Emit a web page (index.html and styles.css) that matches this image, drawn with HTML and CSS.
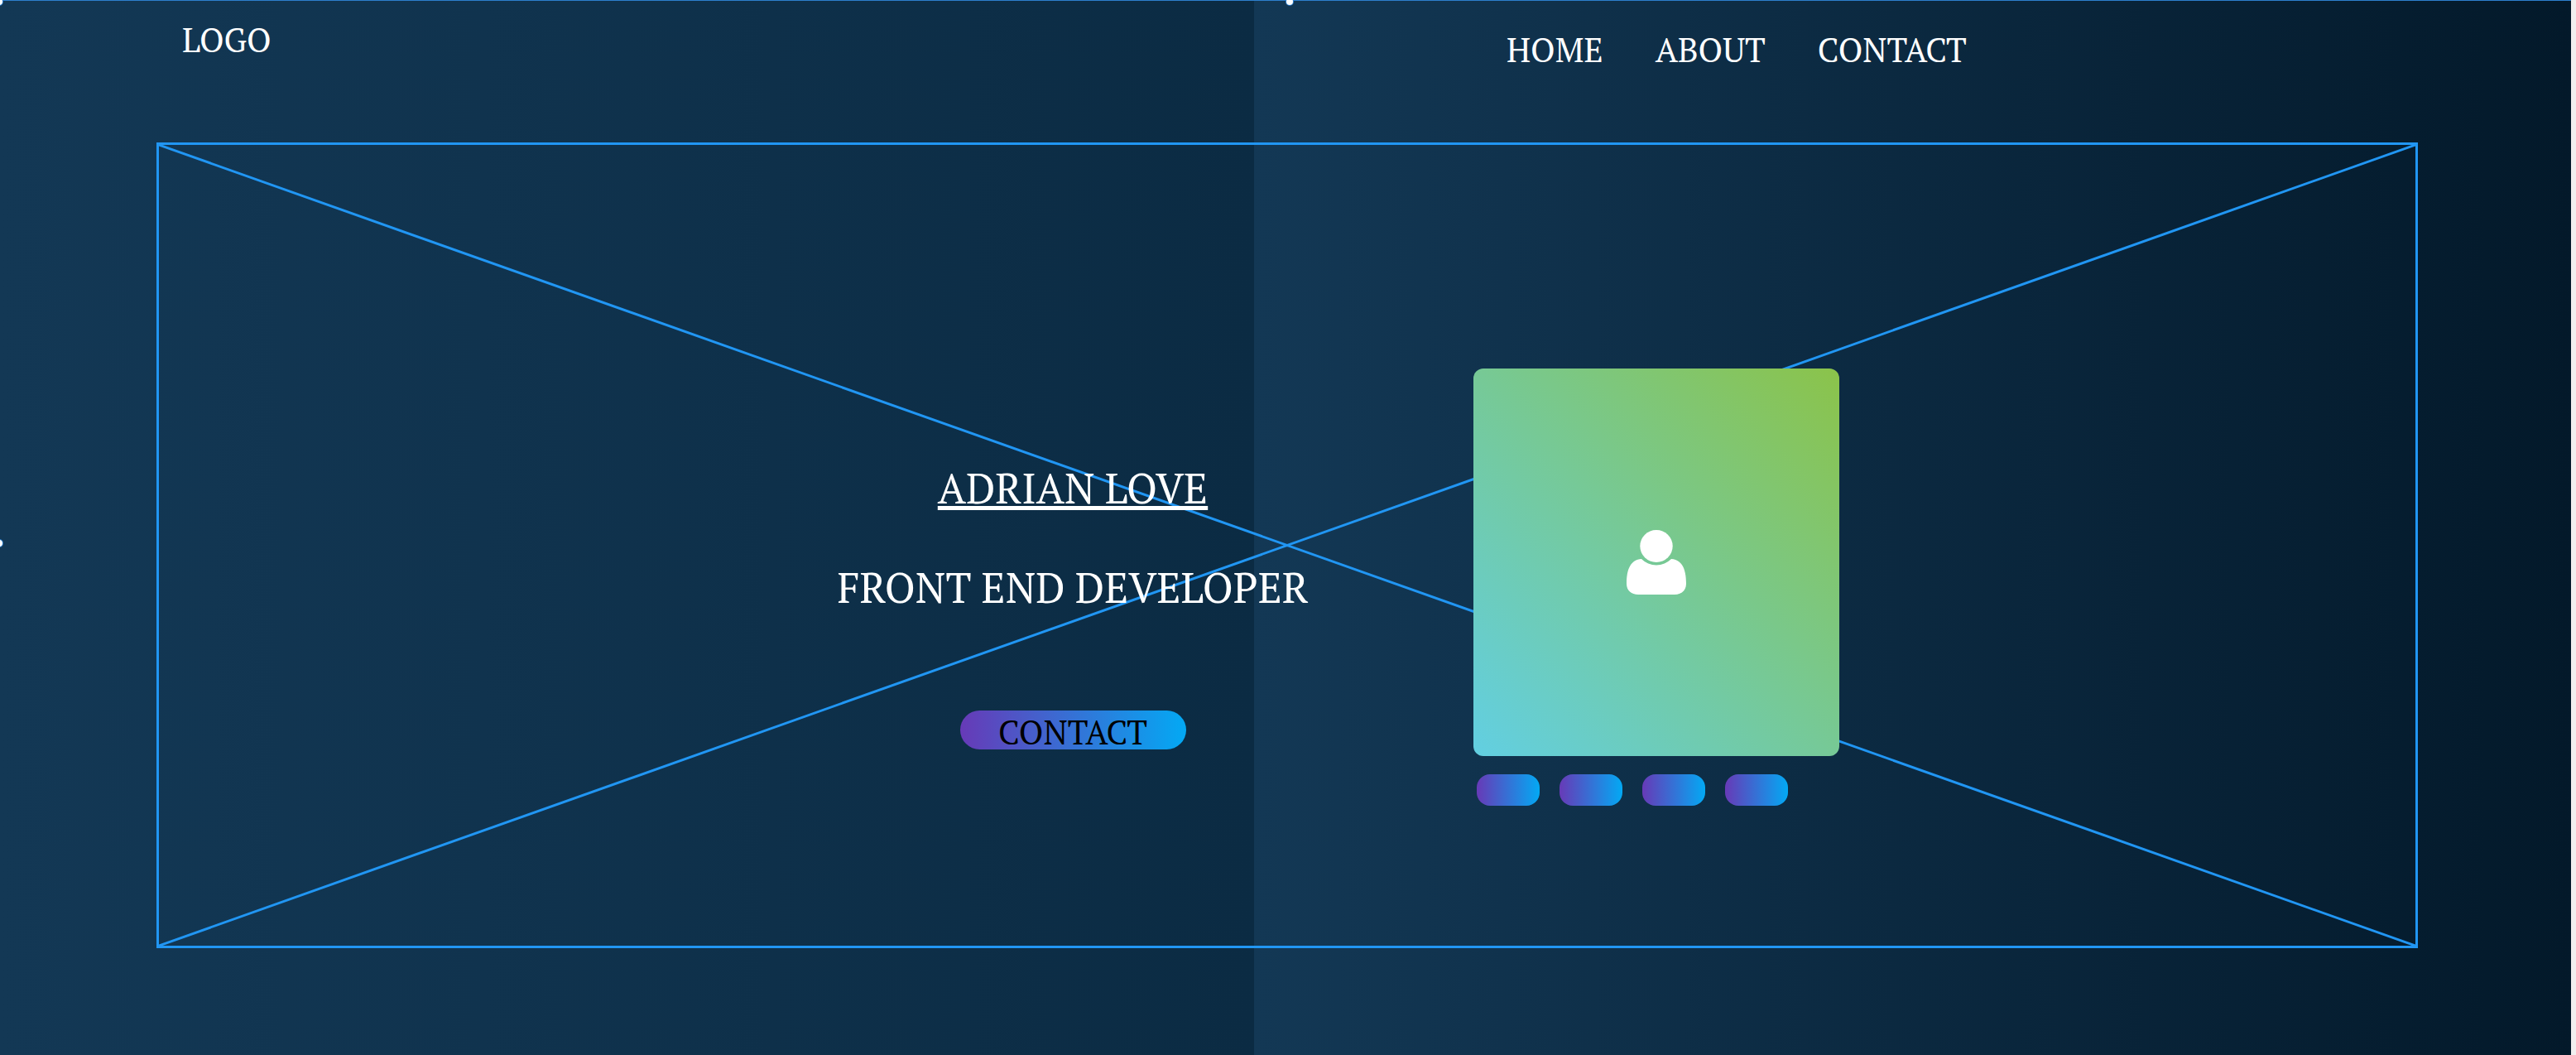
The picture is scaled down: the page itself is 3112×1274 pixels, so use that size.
FILE: index.html
```html
<!DOCTYPE html>
<html lang="en">
<head>
<meta charset="utf-8">
<meta name="viewport" content="width=device-width, initial-scale=1">
<title>Adrian Love</title>
<link rel="stylesheet" href="styles.css">
</head>
<body>
<div class="page">
  <header class="header">
    <a class="logo" href="#">LOGO</a>
    <nav class="nav">
      <a href="#">HOME</a>
      <a href="#">ABOUT</a>
      <a href="#">CONTACT</a>
    </nav>
  </header>
  <main class="hero">
    <svg class="cross" viewBox="0 0 100 100" preserveAspectRatio="none" aria-hidden="true">
      <path d="M0 0L100 100M0 100L100 0" vector-effect="non-scaling-stroke"/>
    </svg>
    <section class="intro">
      <h1>ADRIAN LOVE</h1>
      <h2>FRONT END DEVELOPER</h2>
      <button class="contact" type="button">CONTACT</button>
    </section>
    <section class="profile">
      <div class="card">
        <svg class="person" viewBox="0 0 72 78" aria-hidden="true">
          <ellipse cx="36" cy="19.5" rx="19.7" ry="19.5"/>
          <path d="M18 35C5 36 0 47 0 65C0 73 6 78 14 78H58C66 78 72 73 72 65C72 47 67 36 54 35A25.3 25.3 0 0 1 18 35Z"/>
        </svg>
      </div>
      <div class="links">
        <button type="button" aria-label="Link 1"></button>
        <button type="button" aria-label="Link 2"></button>
        <button type="button" aria-label="Link 3"></button>
        <button type="button" aria-label="Link 4"></button>
      </div>
    </section>
  </main>
  <span class="handle handle-corner"></span>
  <span class="handle handle-top"></span>
  <span class="handle handle-left"></span>
</div>
</body>
</html>
```
FILE: styles.css
```css
* {
  box-sizing: border-box;
}

body {
  margin: 0;
  padding-right: 6px;
  background: #f1efef;
  color: #fff;
  font-family: "PT Serif", "Liberation Serif", serif;
}

.page {
  position: relative;
  display: flex;
  flex-direction: column;
  min-height: 100vh;
  overflow: hidden;
  padding-bottom: 129px;
  background: linear-gradient(90deg, #133855 0%, #0b2b43 48.78%, #133855 48.78%, #03192a 100%);
  box-shadow: inset 0 1px #2d7fcd;
}

.header {
  display: grid;
  grid-template-columns: 1820fr 1286fr;
  align-items: start;
  min-height: 172px;
  padding-top: 24px;
  font-size: 40px;
  line-height: 48px;
}

.header a {
  color: inherit;
  text-decoration: none;
}

.logo {
  padding-left: 220px;
}

.nav {
  display: flex;
  gap: 63px;
  padding-top: 12px;
}

.hero {
  position: relative;
  flex: 1;
  display: grid;
  grid-template-columns: 620fr 968fr 1138fr;
  align-items: start;
  margin: 0 185px 0 189px;
  border: 3px solid #2196f3;
}

.cross {
  position: absolute;
  inset: 0;
  width: 100%;
  height: 100%;
  fill: none;
  stroke: #2196f3;
  stroke-width: 3px;
}

.intro {
  position: relative;
  grid-column: 2;
  display: flex;
  flex-direction: column;
  align-items: center;
  padding-top: 384px;
  white-space: nowrap;
}

h1,
h2 {
  margin: 0 0 60px;
  font-size: 50px;
  font-weight: 400;
  line-height: 60px;
}

h1 {
  text-decoration: underline;
  text-decoration-thickness: 5px;
  text-underline-offset: 3px;
  text-decoration-skip-ink: none;
}

button {
  border: 0;
  padding: 0;
  background: linear-gradient(90deg, #673ab7, #03a9f4);
  font: inherit;
}

.contact {
  width: 273px;
  height: 47px;
  margin-top: 59px;
  padding-top: 4px;
  border-radius: 24px;
  color: #000;
  font-size: 40px;
  line-height: 40px;
}

.profile {
  position: relative;
  grid-column: 3;
  padding: 270px 0 169px;
}

.card {
  display: grid;
  place-items: center;
  width: 442px;
  height: 468px;
  border-radius: 12px;
  background: linear-gradient(to top right, #62cfe2, #8bc34a);
}

.person {
  width: 72px;
  height: 78px;
  fill: #fff;
}

.links {
  display: flex;
  gap: 24px;
  padding: 22px 0 0 4px;
}

.links button {
  width: 76px;
  height: 38px;
  border-radius: 16px;
}

/* Selection handles on the artboard edge */
.handle {
  position: absolute;
  width: 8px;
  height: 8px;
  border-radius: 50%;
  background: #fff;
  box-shadow: 0 0 0 1px #2d7fcd;
}

.handle-corner {
  top: -2px;
  left: -5px;
}

.handle-top {
  top: -2px;
  left: 1554px;
}

.handle-left {
  top: 652px;
  left: -5px;
}
```
